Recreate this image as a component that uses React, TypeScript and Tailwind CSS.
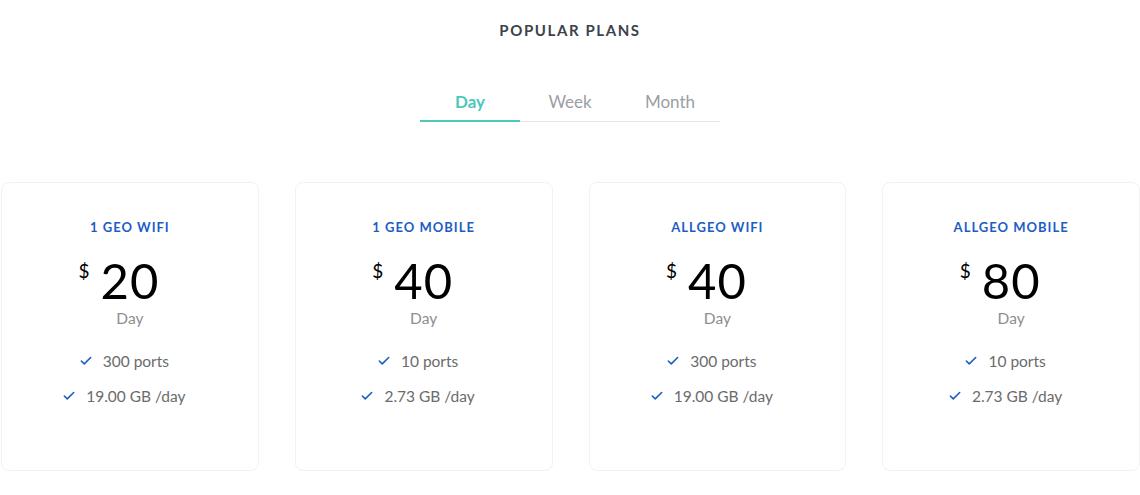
import { Check } from "lucide-react";

const plans = [
  { name: "1 GEO WIFI", price: 20, ports: "300 ports", traffic: "19.00 GB /day" },
  { name: "1 GEO MOBILE", price: 40, ports: "10 ports", traffic: "2.73 GB /day" },
  { name: "ALLGEO WIFI", price: 40, ports: "300 ports", traffic: "19.00 GB /day" },
  { name: "ALLGEO MOBILE", price: 80, ports: "10 ports", traffic: "2.73 GB /day" },
];

const tabs = ["Day", "Week", "Month"];

function PlanCard({ plan }: { plan: (typeof plans)[number] }) {
  return (
    <div className="flex h-[289px] w-[258px] flex-col items-center rounded-lg border border-[#f2f2f2] bg-white pt-[36px]">
      <h3 className="text-[13px] font-bold leading-4 tracking-[1px] text-[#1c5dc4]">
        {plan.name}
      </h3>
      <div className="mt-[21px] flex items-start pr-[22px]">
        <span className="mr-[11px] mt-[5px] text-[19px] leading-5 text-black">$</span>
        <span className="text-[49px] leading-[48px] tracking-[1px] text-black">{plan.price}</span>
      </div>
      <span className="mt-[4px] text-[15.5px] leading-5 text-[#8e8e8e]">Day</span>
      <ul className="mt-[23px] flex flex-col items-center gap-[15px] pr-[12px] text-[15.5px] leading-5 text-[#6b6b6b]">
        <li className="flex items-center gap-[10px]">
          <Check className="h-[14px] w-[14px] text-[#1c5dc4]" strokeWidth={2.75} />
          {plan.ports}
        </li>
        <li className="flex items-center gap-[10px]">
          <Check className="h-[14px] w-[14px] text-[#1c5dc4]" strokeWidth={2.75} />
          {plan.traffic}
        </li>
      </ul>
    </div>
  );
}

export default function App() {
  return (
    <div className="h-[495px] w-[1140px] bg-white font-['Lato',sans-serif]">
      <h2 className="pt-[22px] text-center text-[15px] font-bold leading-4 tracking-[1.6px] text-[#3c424b]">
        POPULAR PLANS
      </h2>

      <div className="mt-[52px] flex justify-center">
        <div className="flex border-b border-[#e6e6e6]">
          {tabs.map((tab, i) => (
            <button
              key={tab}
              className={`-mb-px w-[100px] pb-[6px] text-[17px] leading-6 ${
                i === 0
                  ? "border-b-2 border-[#4dc7bb] font-bold text-[#4dc7bb]"
                  : "border-b-2 border-transparent text-[#9a9ea4]"
              }`}
            >
              {tab}
            </button>
          ))}
        </div>
      </div>

      <div className="mt-[60px] flex gap-[36px] pl-px">
        {plans.map((plan) => (
          <PlanCard key={plan.name} plan={plan} />
        ))}
      </div>
    </div>
  );
}
